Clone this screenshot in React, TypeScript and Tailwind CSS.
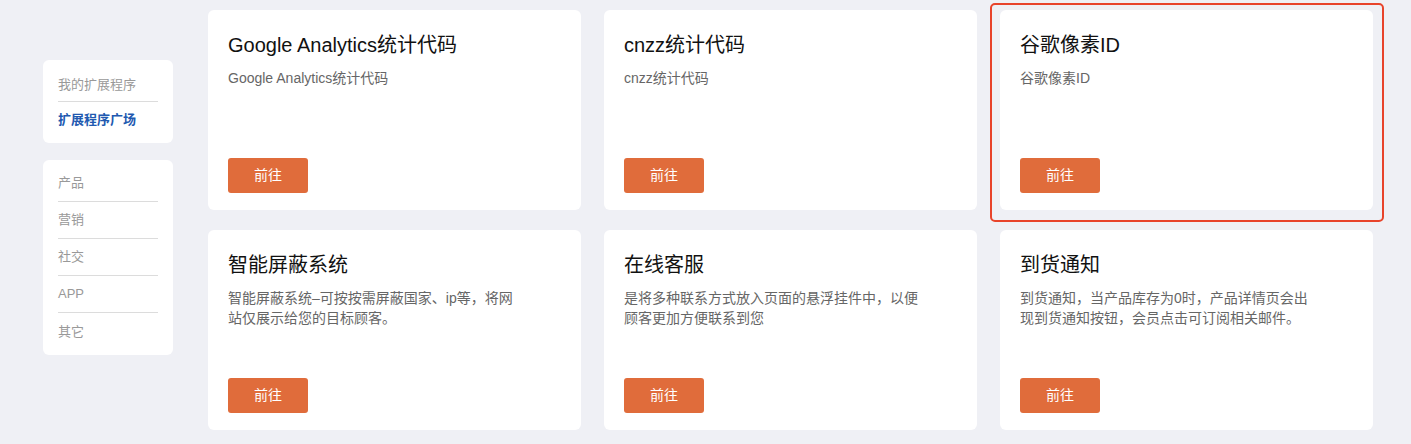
const apps = [
  { title: "Google Analytics统计代码", desc: "Google Analytics统计代码" },
  { title: "cnzz统计代码", desc: "cnzz统计代码" },
  { title: "谷歌像素ID", desc: "谷歌像素ID", marked: true },
  { title: "智能屏蔽系统", desc: "智能屏蔽系统–可按按需屏蔽国家、ip等，将网站仅展示给您的目标顾客。" },
  { title: "在线客服", desc: "是将多种联系方式放入页面的悬浮挂件中，以便顾客更加方便联系到您" },
  { title: "到货通知", desc: "到货通知，当产品库存为0时，产品详情页会出现到货通知按钮，会员点击可订阅相关邮件。" },
];

const categories = ["产品", "营销", "社交", "APP", "其它"];

export default function App() {
  return (
    <div className="flex min-h-[444px] items-start gap-[35px] bg-[#eff0f5] pl-[43px] pt-[10px] font-['Liberation_Sans','Noto_Sans_CJK_SC',sans-serif]">
      <aside className="mt-[50px] flex w-[130px] flex-col gap-[17px]">
        <div className="rounded-[6px] bg-white px-[15px] pb-[5px] pt-[8px] text-[13px]">
          <div className="flex h-[34px] items-center border-b border-[#dcdcdc] text-[#999]">我的扩展程序</div>
          <div className="flex h-[36px] items-center font-bold text-[#2159b0]">扩展程序广场</div>
        </div>
        <div className="rounded-[6px] bg-white px-[15px] py-[5px] text-[13px] text-[#999]">
          {categories.map((c, i) => (
            <div
              key={c}
              className={
                i < categories.length - 1
                  ? "flex h-[37px] items-center border-b border-[#dcdcdc]"
                  : "flex h-[37px] items-center"
              }
            >
              {c}
            </div>
          ))}
        </div>
      </aside>

      <main className="grid grid-cols-[373px_373px_373px] gap-x-[23px] gap-y-[20px]">
        {apps.map((a) => (
          <div key={a.title} className="relative">
            {a.marked && (
              <div className="pointer-events-none absolute -bottom-[12px] -left-[10px] -right-[11px] -top-[7px] rounded-[5px] border-2 border-[#e8442b]" />
            )}
            <div className="flex h-[200px] flex-col rounded-[6px] bg-white px-[20px] pb-[17px] pt-[21px]">
              <h2 className="text-[20px] leading-[28px] text-[#111]">{a.title}</h2>
              <p className="mt-[9px] max-w-[296px] text-[14px] leading-[20px] text-[#666]">{a.desc}</p>
              <button
                type="button"
                className="mt-auto h-[35px] w-[80px] rounded-[3px] bg-[#e06c3b] text-[14px] text-white"
              >
                前往
              </button>
            </div>
          </div>
        ))}
      </main>
    </div>
  );
}
